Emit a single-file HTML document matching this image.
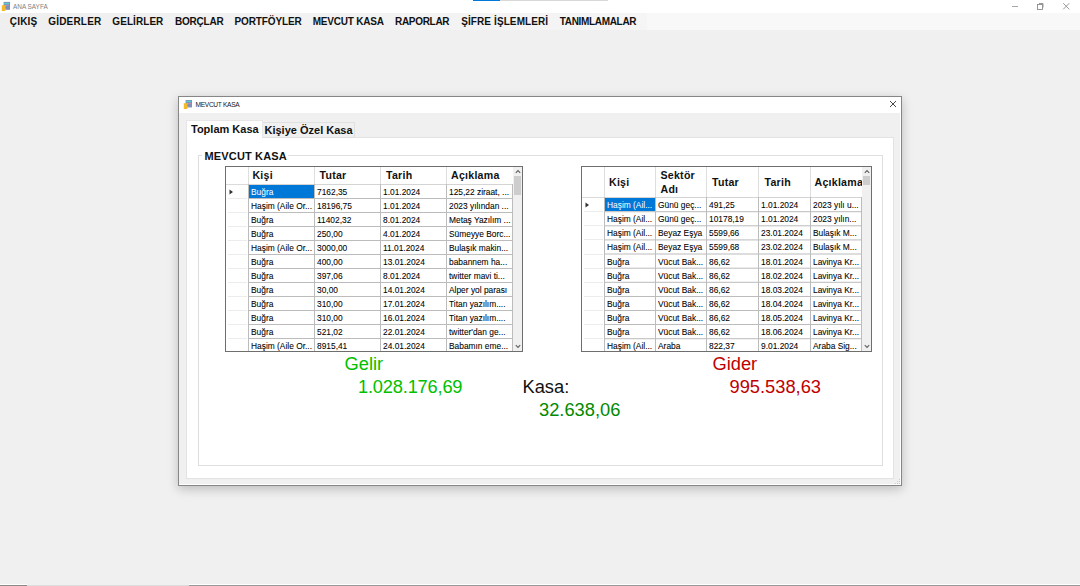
<!DOCTYPE html><html><head><meta charset="utf-8"><style>
*{margin:0;padding:0;box-sizing:border-box}
html,body{width:1080px;height:586px;overflow:hidden;background:#f0f0f0;font-family:"Liberation Sans",sans-serif}
body{position:relative}
div{position:absolute}
.mi{top:16px;font-size:10px;font-weight:bold;color:#111;line-height:12px;white-space:nowrap}
.cell{font-size:8.4px;color:#000;-webkit-text-stroke:0.07px #000;white-space:nowrap;line-height:10px}
.hd{font-size:10.6px;letter-spacing:0.25px;font-weight:bold;color:#111;white-space:nowrap;line-height:12px}
.big{font-size:18.3px;white-space:nowrap;line-height:20px}
</style></head><body>
<div style="left:0px;top:0px;width:1080px;height:13px;background:#fff"></div>
<div style="left:473px;top:0px;width:27px;height:1px;background:#0078d7"></div>
<div style="left:500px;top:0px;width:108px;height:1px;background:#d8d8d8"></div>
<div style="left:0px;top:13px;width:647px;height:17px;background:linear-gradient(to right,#efefef,#f5f5f5)"></div>
<div style="left:647px;top:13px;width:433px;height:17px;background:#f8f8f8"></div>
<div class="mi" style="left:9.8px;top:16px;letter-spacing:0.17px">ÇIKIŞ</div>
<div class="mi" style="left:48.2px;top:16px;letter-spacing:0.2px">GİDERLER</div>
<div class="mi" style="left:112.3px;top:16px;letter-spacing:0.07px">GELİRLER</div>
<div class="mi" style="left:175px;top:16px;letter-spacing:-0.22px">BORÇLAR</div>
<div class="mi" style="left:234.5px;top:16px;letter-spacing:-0.11px">PORTFÖYLER</div>
<div class="mi" style="left:312.7px;top:16px;letter-spacing:-0.2px">MEVCUT KASA</div>
<div class="mi" style="left:395px;top:16px;letter-spacing:-0.3px">RAPORLAR</div>
<div class="mi" style="left:461.2px;top:16px;letter-spacing:0.1px">ŞİFRE İŞLEMLERİ</div>
<div class="mi" style="left:559.7px;top:16px;letter-spacing:-0.32px">TANIMLAMALAR</div>
<svg style="position:absolute;left:1px;top:1px" width="11" height="11"><rect x="2.6" y="0.9" width="6.4" height="7.9" fill="#8090b8"/><rect x="3.3" y="1.8" width="4.9" height="1.4" fill="#55d0d0"/><rect x="4" y="4.2" width="4" height="0.7" fill="#d090b0"/><path d="M0.8 4.2 h4 v1.5 h-0.5 v1.4 h0.5 v1.6 h-0.5 v1.4 h-3.5 z" fill="#f5b828"/></svg>
<div class="" style="left:13px;top:3px;font-size:6.4px;color:#808080;line-height:8px;white-space:nowrap">ANA SAYFA</div>
<div style="left:1012px;top:5.5px;width:6px;height:1px;background:#a8a8a8"></div>
<svg style="position:absolute;left:1036px;top:2px" width="9" height="9"><rect x="1.5" y="2.5" width="5" height="5" fill="none" stroke="#8c8c8c" stroke-width="0.9"/><path d="M3 1.5 h4 v4" fill="none" stroke="#8c8c8c" stroke-width="0.9"/></svg>
<svg style="position:absolute;left:1062px;top:2px" width="9" height="9"><path d="M1.2 1.2 L7.3 7.3 M7.3 1.2 L1.2 7.3" stroke="#8c8c8c" stroke-width="0.9"/></svg>
<div style="left:0px;top:584px;width:27px;height:1px;background:#fff"></div>
<div style="left:0px;top:585px;width:27px;height:1px;background:#8c8888"></div>
<div style="left:27px;top:585px;width:162px;height:1px;background:#dcdcdc"></div>
<div style="left:189px;top:584px;width:891px;height:1px;background:#fff"></div>
<div style="left:189px;top:585px;width:891px;height:1px;background:#999"></div>
<div style="left:178px;top:96px;width:724px;height:390px;background:#f0f0f0;border:1px solid #868686;box-shadow:0 3px 10px rgba(0,0,0,0.22)"></div>
<div style="left:179px;top:97px;width:722px;height:16px;background:#fff"></div>
<svg style="position:absolute;left:183px;top:99px" width="11" height="11"><rect x="2.6" y="1" width="6.4" height="7.4" fill="#8090b8"/><rect x="3.3" y="1.8" width="4.9" height="1.3" fill="#55d0d0"/><rect x="4" y="4" width="4" height="0.7" fill="#d090b0"/><path d="M0.8 4.2 h4 v1.5 h-0.5 v1.4 h0.5 v1.6 h-0.5 v1.4 h-3.5 z" fill="#f5b828"/></svg>
<div class="" style="left:195.5px;top:100.5px;font-size:6.6px;color:#151515;line-height:8px;white-space:nowrap;letter-spacing:-0.3px">MEVCUT KASA</div>
<svg style="position:absolute;left:889px;top:100px" width="8" height="8"><path d="M1 1 L7 7 M7 1 L1 7" stroke="#333" stroke-width="0.9"/></svg>
<div style="left:900px;top:97px;width:1px;height:388px;background:#fff"></div>
<div style="left:179px;top:484px;width:722px;height:1px;background:#fff"></div>
<svg style="position:absolute;left:895px;top:479px" width="6" height="6"><g fill="#cbcbcb"><rect x="4" y="0" width="1" height="1"/><rect x="2" y="2" width="1" height="1"/><rect x="4" y="2" width="1" height="1"/><rect x="0" y="4" width="1" height="1"/><rect x="2" y="4" width="1" height="1"/><rect x="4" y="4" width="1" height="1"/></g></svg>
<div style="left:186px;top:137px;width:708px;height:342px;background:#fff;border:1px solid #e3e3e3"></div>
<div style="left:262px;top:122px;width:93px;height:16px;background:#f0f0f0;border:1px solid #e0e0e0"></div>
<div style="left:186px;top:120px;width:77px;height:18px;background:#fff;border:1px solid #e6e6e6;border-bottom:none"></div>
<div class="hd" style="left:191px;top:122px;font-size:11px;line-height:14px;letter-spacing:0">Toplam Kasa</div>
<div class="hd" style="left:264.5px;top:122.5px;font-size:11px;line-height:14px;letter-spacing:0">Kişiye Özel Kasa</div>
<div style="left:198px;top:155px;width:685px;height:311px;border:1px solid #dedede"></div>
<div style="left:202px;top:149px;width:86px;height:12px;background:#fff"></div>
<div class="hd" style="left:204.5px;top:149px;font-size:11px;line-height:14px;letter-spacing:0.15px">MEVCUT KASA</div>
<div style="left:225px;top:166px;width:298px;height:186px;background:#fff;border:1px solid #6e6e6e"></div>
<div style="left:248px;top:167px;width:1px;height:17px;background:#dedede"></div>
<div style="left:314px;top:167px;width:1px;height:17px;background:#dedede"></div>
<div style="left:380px;top:167px;width:1px;height:17px;background:#dedede"></div>
<div style="left:446px;top:167px;width:1px;height:17px;background:#dedede"></div>
<div style="left:226px;top:184px;width:22px;height:1px;background:#dadada"></div>
<div style="left:248px;top:184px;width:264px;height:1px;background:#d4d4d4"></div>
<div style="left:228px;top:198px;width:19px;height:1px;background:#ececec"></div>
<div style="left:248px;top:198px;width:264px;height:1px;background:#bcbcbc"></div>
<div style="left:228px;top:212px;width:19px;height:1px;background:#ececec"></div>
<div style="left:248px;top:212px;width:264px;height:1px;background:#bcbcbc"></div>
<div style="left:228px;top:226px;width:19px;height:1px;background:#ececec"></div>
<div style="left:248px;top:226px;width:264px;height:1px;background:#bcbcbc"></div>
<div style="left:228px;top:240px;width:19px;height:1px;background:#ececec"></div>
<div style="left:248px;top:240px;width:264px;height:1px;background:#bcbcbc"></div>
<div style="left:228px;top:254px;width:19px;height:1px;background:#ececec"></div>
<div style="left:248px;top:254px;width:264px;height:1px;background:#bcbcbc"></div>
<div style="left:228px;top:268px;width:19px;height:1px;background:#ececec"></div>
<div style="left:248px;top:268px;width:264px;height:1px;background:#bcbcbc"></div>
<div style="left:228px;top:282px;width:19px;height:1px;background:#ececec"></div>
<div style="left:248px;top:282px;width:264px;height:1px;background:#bcbcbc"></div>
<div style="left:228px;top:296px;width:19px;height:1px;background:#ececec"></div>
<div style="left:248px;top:296px;width:264px;height:1px;background:#bcbcbc"></div>
<div style="left:228px;top:310px;width:19px;height:1px;background:#ececec"></div>
<div style="left:248px;top:310px;width:264px;height:1px;background:#bcbcbc"></div>
<div style="left:228px;top:324px;width:19px;height:1px;background:#ececec"></div>
<div style="left:248px;top:324px;width:264px;height:1px;background:#bcbcbc"></div>
<div style="left:228px;top:338px;width:19px;height:1px;background:#ececec"></div>
<div style="left:248px;top:338px;width:264px;height:1px;background:#bcbcbc"></div>
<div style="left:248px;top:184px;width:1px;height:167px;background:#bcbcbc"></div>
<div style="left:314px;top:184px;width:1px;height:167px;background:#bcbcbc"></div>
<div style="left:380px;top:184px;width:1px;height:167px;background:#bcbcbc"></div>
<div style="left:446px;top:184px;width:1px;height:167px;background:#bcbcbc"></div>
<div style="left:512px;top:184px;width:1px;height:167px;background:#bcbcbc"></div>
<div style="left:249px;top:185px;width:65px;height:13px;background:#0078d7"></div>
<svg style="position:absolute;left:229px;top:189px" width="5" height="6"><path d="M0.5 0.5 L4 3 L0.5 5.5Z" fill="#333"/></svg>
<div class="hd" style="left:252.4px;top:169px;">Kişi</div>
<div class="hd" style="left:319.5px;top:169px;">Tutar</div>
<div class="hd" style="left:386px;top:169px;">Tarih</div>
<div class="hd" style="left:451px;top:169px;">Açıklama</div>
<div class="cell" style="left:251px;top:187px;color:#fff;-webkit-text-stroke:0">Buğra</div>
<div class="cell" style="left:317px;top:187px;">7162,35</div>
<div class="cell" style="left:383px;top:187px;">1.01.2024</div>
<div class="cell" style="left:449px;top:187px;">125,22 ziraat, ...</div>
<div class="cell" style="left:251px;top:201px;">Haşim (Aile Or...</div>
<div class="cell" style="left:317px;top:201px;">18196,75</div>
<div class="cell" style="left:383px;top:201px;">1.01.2024</div>
<div class="cell" style="left:449px;top:201px;">2023 yılından ...</div>
<div class="cell" style="left:251px;top:215px;">Buğra</div>
<div class="cell" style="left:317px;top:215px;">11402,32</div>
<div class="cell" style="left:383px;top:215px;">8.01.2024</div>
<div class="cell" style="left:449px;top:215px;">Metaş Yazılım ...</div>
<div class="cell" style="left:251px;top:229px;">Buğra</div>
<div class="cell" style="left:317px;top:229px;">250,00</div>
<div class="cell" style="left:383px;top:229px;">4.01.2024</div>
<div class="cell" style="left:449px;top:229px;">Sümeyye Borc...</div>
<div class="cell" style="left:251px;top:243px;">Haşim (Aile Or...</div>
<div class="cell" style="left:317px;top:243px;">3000,00</div>
<div class="cell" style="left:383px;top:243px;">11.01.2024</div>
<div class="cell" style="left:449px;top:243px;">Bulaşık makin...</div>
<div class="cell" style="left:251px;top:257px;">Buğra</div>
<div class="cell" style="left:317px;top:257px;">400,00</div>
<div class="cell" style="left:383px;top:257px;">13.01.2024</div>
<div class="cell" style="left:449px;top:257px;">babannem ha...</div>
<div class="cell" style="left:251px;top:271px;">Buğra</div>
<div class="cell" style="left:317px;top:271px;">397,06</div>
<div class="cell" style="left:383px;top:271px;">8.01.2024</div>
<div class="cell" style="left:449px;top:271px;">twitter mavi ti...</div>
<div class="cell" style="left:251px;top:285px;">Buğra</div>
<div class="cell" style="left:317px;top:285px;">30,00</div>
<div class="cell" style="left:383px;top:285px;">14.01.2024</div>
<div class="cell" style="left:449px;top:285px;">Alper yol parası</div>
<div class="cell" style="left:251px;top:299px;">Buğra</div>
<div class="cell" style="left:317px;top:299px;">310,00</div>
<div class="cell" style="left:383px;top:299px;">17.01.2024</div>
<div class="cell" style="left:449px;top:299px;">Titan yazılım....</div>
<div class="cell" style="left:251px;top:313px;">Buğra</div>
<div class="cell" style="left:317px;top:313px;">310,00</div>
<div class="cell" style="left:383px;top:313px;">16.01.2024</div>
<div class="cell" style="left:449px;top:313px;">Titan yazılım....</div>
<div class="cell" style="left:251px;top:327px;">Buğra</div>
<div class="cell" style="left:317px;top:327px;">521,02</div>
<div class="cell" style="left:383px;top:327px;">22.01.2024</div>
<div class="cell" style="left:449px;top:327px;">twitter'dan ge...</div>
<div class="cell" style="left:251px;top:341px;">Haşim (Aile Or...</div>
<div class="cell" style="left:317px;top:341px;">8915,41</div>
<div class="cell" style="left:383px;top:341px;">24.01.2024</div>
<div class="cell" style="left:449px;top:341px;">Babamın eme...</div>
<div style="left:513px;top:167px;width:9px;height:184px;background:#f0f0f0"></div>
<div style="left:514px;top:176px;width:7px;height:19px;background:#cdcdcd"></div>
<svg style="position:absolute;left:515px;top:169px" width="6" height="5"><path d="M0.8 3.8 L3 1.5 L5.2 3.8" stroke="#606060" stroke-width="1.1" fill="none"/></svg>
<svg style="position:absolute;left:515px;top:344px" width="6" height="5"><path d="M0.8 1.2 L3 3.5 L5.2 1.2" stroke="#606060" stroke-width="1.1" fill="none"/></svg>
<div style="left:581px;top:166px;width:291px;height:186px;background:#fff;border:1px solid #6e6e6e"></div>
<div style="left:604px;top:167px;width:1px;height:30px;background:#dedede"></div>
<div style="left:655px;top:167px;width:1px;height:30px;background:#dedede"></div>
<div style="left:706px;top:167px;width:1px;height:30px;background:#dedede"></div>
<div style="left:758px;top:167px;width:1px;height:30px;background:#dedede"></div>
<div style="left:810px;top:167px;width:1px;height:30px;background:#dedede"></div>
<div style="left:582px;top:197px;width:22px;height:1px;background:#dadada"></div>
<div style="left:604px;top:197px;width:257px;height:1px;background:#d4d4d4"></div>
<div style="left:584px;top:211px;width:19px;height:1px;background:#ececec"></div>
<div style="left:604px;top:211px;width:257px;height:1px;background:rgba(0,0,0,0.216)"></div>
<div style="left:604px;top:212px;width:257px;height:1px;background:rgba(0,0,0,0.054)"></div>
<div style="left:584px;top:225px;width:19px;height:1px;background:#ececec"></div>
<div style="left:604px;top:225px;width:257px;height:1px;background:rgba(0,0,0,0.189)"></div>
<div style="left:604px;top:226px;width:257px;height:1px;background:rgba(0,0,0,0.081)"></div>
<div style="left:584px;top:239px;width:19px;height:1px;background:#ececec"></div>
<div style="left:604px;top:239px;width:257px;height:1px;background:rgba(0,0,0,0.162)"></div>
<div style="left:604px;top:240px;width:257px;height:1px;background:rgba(0,0,0,0.108)"></div>
<div style="left:584px;top:254px;width:19px;height:1px;background:#ececec"></div>
<div style="left:604px;top:253px;width:257px;height:1px;background:rgba(0,0,0,0.135)"></div>
<div style="left:604px;top:254px;width:257px;height:1px;background:rgba(0,0,0,0.135)"></div>
<div style="left:584px;top:268px;width:19px;height:1px;background:#ececec"></div>
<div style="left:604px;top:267px;width:257px;height:1px;background:rgba(0,0,0,0.081)"></div>
<div style="left:604px;top:268px;width:257px;height:1px;background:rgba(0,0,0,0.189)"></div>
<div style="left:584px;top:282px;width:19px;height:1px;background:#ececec"></div>
<div style="left:604px;top:281px;width:257px;height:1px;background:rgba(0,0,0,0.054)"></div>
<div style="left:604px;top:282px;width:257px;height:1px;background:rgba(0,0,0,0.216)"></div>
<div style="left:584px;top:296px;width:19px;height:1px;background:#ececec"></div>
<div style="left:604px;top:296px;width:257px;height:1px;background:#bcbcbc"></div>
<div style="left:584px;top:310px;width:19px;height:1px;background:#ececec"></div>
<div style="left:604px;top:310px;width:257px;height:1px;background:#bcbcbc"></div>
<div style="left:584px;top:324px;width:19px;height:1px;background:#ececec"></div>
<div style="left:604px;top:324px;width:257px;height:1px;background:#bcbcbc"></div>
<div style="left:584px;top:338px;width:19px;height:1px;background:#ececec"></div>
<div style="left:604px;top:338px;width:257px;height:1px;background:rgba(0,0,0,0.216)"></div>
<div style="left:604px;top:339px;width:257px;height:1px;background:rgba(0,0,0,0.054)"></div>
<div style="left:604px;top:197px;width:1px;height:154px;background:#bcbcbc"></div>
<div style="left:655px;top:197px;width:1px;height:154px;background:#bcbcbc"></div>
<div style="left:706px;top:197px;width:1px;height:154px;background:#bcbcbc"></div>
<div style="left:758px;top:197px;width:1px;height:154px;background:#bcbcbc"></div>
<div style="left:810px;top:197px;width:1px;height:154px;background:#bcbcbc"></div>
<div style="left:861px;top:197px;width:1px;height:154px;background:#bcbcbc"></div>
<div style="left:605px;top:198px;width:50px;height:13.199999999999989px;background:#0078d7"></div>
<svg style="position:absolute;left:585px;top:202px" width="5" height="6"><path d="M0.5 0.5 L4 3 L0.5 5.5Z" fill="#333"/></svg>
<div class="hd" style="left:609px;top:176px;">Kişi</div>
<div class="hd" style="left:660.5px;top:168px;"><span style="line-height:14px;display:block">Sektör<br>Adı</span></div>
<div class="hd" style="left:712px;top:176px;">Tutar</div>
<div class="hd" style="left:764.5px;top:176px;">Tarih</div>
<div class="hd" style="left:814.5px;top:176px;">Açıklama</div>
<div class="cell" style="left:607px;top:200px;color:#fff;-webkit-text-stroke:0">Haşim (Ail...</div>
<div class="cell" style="left:658px;top:200px;">Günü geç...</div>
<div class="cell" style="left:709px;top:200px;">491,25</div>
<div class="cell" style="left:761px;top:200px;">1.01.2024</div>
<div class="cell" style="left:813px;top:200px;">2023 yılı u...</div>
<div class="cell" style="left:607px;top:214px;">Haşim (Ail...</div>
<div class="cell" style="left:658px;top:214px;">Günü geç...</div>
<div class="cell" style="left:709px;top:214px;">10178,19</div>
<div class="cell" style="left:761px;top:214px;">1.01.2024</div>
<div class="cell" style="left:813px;top:214px;">2023 yılın...</div>
<div class="cell" style="left:607px;top:228px;">Haşim (Ail...</div>
<div class="cell" style="left:658px;top:228px;">Beyaz Eşya</div>
<div class="cell" style="left:709px;top:228px;">5599,66</div>
<div class="cell" style="left:761px;top:228px;">23.01.2024</div>
<div class="cell" style="left:813px;top:228px;">Bulaşık M...</div>
<div class="cell" style="left:607px;top:242px;">Haşim (Ail...</div>
<div class="cell" style="left:658px;top:242px;">Beyaz Eşya</div>
<div class="cell" style="left:709px;top:242px;">5599,68</div>
<div class="cell" style="left:761px;top:242px;">23.02.2024</div>
<div class="cell" style="left:813px;top:242px;">Bulaşık M...</div>
<div class="cell" style="left:607px;top:257px;">Buğra</div>
<div class="cell" style="left:658px;top:257px;">Vücut Bak...</div>
<div class="cell" style="left:709px;top:257px;">86,62</div>
<div class="cell" style="left:761px;top:257px;">18.01.2024</div>
<div class="cell" style="left:813px;top:257px;">Lavinya Kr...</div>
<div class="cell" style="left:607px;top:271px;">Buğra</div>
<div class="cell" style="left:658px;top:271px;">Vücut Bak...</div>
<div class="cell" style="left:709px;top:271px;">86,62</div>
<div class="cell" style="left:761px;top:271px;">18.02.2024</div>
<div class="cell" style="left:813px;top:271px;">Lavinya Kr...</div>
<div class="cell" style="left:607px;top:285px;">Buğra</div>
<div class="cell" style="left:658px;top:285px;">Vücut Bak...</div>
<div class="cell" style="left:709px;top:285px;">86,62</div>
<div class="cell" style="left:761px;top:285px;">18.03.2024</div>
<div class="cell" style="left:813px;top:285px;">Lavinya Kr...</div>
<div class="cell" style="left:607px;top:299px;">Buğra</div>
<div class="cell" style="left:658px;top:299px;">Vücut Bak...</div>
<div class="cell" style="left:709px;top:299px;">86,62</div>
<div class="cell" style="left:761px;top:299px;">18.04.2024</div>
<div class="cell" style="left:813px;top:299px;">Lavinya Kr...</div>
<div class="cell" style="left:607px;top:313px;">Buğra</div>
<div class="cell" style="left:658px;top:313px;">Vücut Bak...</div>
<div class="cell" style="left:709px;top:313px;">86,62</div>
<div class="cell" style="left:761px;top:313px;">18.05.2024</div>
<div class="cell" style="left:813px;top:313px;">Lavinya Kr...</div>
<div class="cell" style="left:607px;top:327px;">Buğra</div>
<div class="cell" style="left:658px;top:327px;">Vücut Bak...</div>
<div class="cell" style="left:709px;top:327px;">86,62</div>
<div class="cell" style="left:761px;top:327px;">18.06.2024</div>
<div class="cell" style="left:813px;top:327px;">Lavinya Kr...</div>
<div class="cell" style="left:607px;top:341px;">Haşim (Ail...</div>
<div class="cell" style="left:658px;top:341px;">Araba</div>
<div class="cell" style="left:709px;top:341px;">822,37</div>
<div class="cell" style="left:761px;top:341px;">9.01.2024</div>
<div class="cell" style="left:813px;top:341px;">Araba Sig...</div>
<div style="left:862px;top:167px;width:9px;height:184px;background:#f0f0f0"></div>
<div style="left:863px;top:176px;width:7px;height:9px;background:#cdcdcd"></div>
<svg style="position:absolute;left:864px;top:169px" width="6" height="5"><path d="M0.8 3.8 L3 1.5 L5.2 3.8" stroke="#606060" stroke-width="1.1" fill="none"/></svg>
<svg style="position:absolute;left:864px;top:344px" width="6" height="5"><path d="M0.8 1.2 L3 3.5 L5.2 1.2" stroke="#606060" stroke-width="1.1" fill="none"/></svg>
<div class="big" style="left:344.5px;top:353.5px;color:#00c000">Gelir</div>
<div class="big" style="left:358px;top:376.5px;color:#00c000;letter-spacing:-0.2px">1.028.176,69</div>
<div class="big" style="left:522.5px;top:376.5px;color:#111">Kasa:</div>
<div class="big" style="left:539px;top:399.5px;color:#008a00">32.638,06</div>
<div class="big" style="left:712.5px;top:353.5px;color:#c00000">Gider</div>
<div class="big" style="left:729.5px;top:376.5px;color:#c00000">995.538,63</div>
</body></html>
